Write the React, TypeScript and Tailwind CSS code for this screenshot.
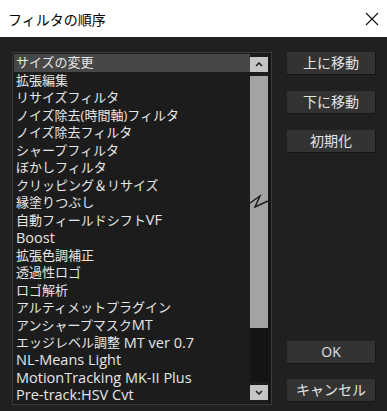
import React from "react";

const items = [
  "サイズの変更",
  "拡張編集",
  "リサイズフィルタ",
  "ノイズ除去(時間軸)フィルタ",
  "ノイズ除去フィルタ",
  "シャープフィルタ",
  "ぼかしフィルタ",
  "クリッピング＆リサイズ",
  "縁塗りつぶし",
  "自動フィールドシフトVF",
  "Boost",
  "拡張色調補正",
  "透過性ロゴ",
  "ロゴ解析",
  "アルティメットプラグイン",
  "アンシャープマスクMT",
  "エッジレベル調整 MT ver 0.7",
  "NL-Means Light",
  "MotionTracking MK-II Plus",
  "Pre-track:HSV Cvt",
];

const font = { fontFamily: '"Noto Sans CJK JP", "Noto Sans", sans-serif' };
const listFont = { fontFamily: '"Open Sans", "Noto Sans CJK JP", sans-serif' };

function Runs({ text }: { text: string }) {
  const parts = text.split(/([A-Za-z0-9 .:\-]+)/).filter((p) => p.length > 0);
  return (
    <>
      {parts.map((p, i) =>
        /^[A-Za-z0-9 .:\-]+$/.test(p) ? (
          <span key={i} className="text-[14.5px] whitespace-pre">
            {p}
          </span>
        ) : (
          <span key={i}>{p}</span>
        )
      )}
    </>
  );
}

function Btn({ children }: { children: React.ReactNode }) {
  return (
    <div
      className="w-[89px] h-[23px] bg-[#333333] border-b border-r border-[#161616] flex items-center justify-center text-[14px] text-[#e4e4e4] leading-none"
      style={listFont}
    >
      {children}
    </div>
  );
}

export default function App() {
  return (
    <div className="w-[387px] h-[411px] flex flex-col overflow-hidden" style={font}>
      <div className="h-[37px] bg-white flex items-center justify-between pl-[8px] pr-[6px] shrink-0">
        <span className="text-[14px] text-black leading-none">フィルタの順序</span>
        <svg width="14" height="14" viewBox="0 0 14 14" className="mr-[2px]">
          <path d="M1 1 L13 13 M13 1 L1 13" stroke="#111" strokeWidth="1.1" fill="none" />
        </svg>
      </div>
      <div className="flex-1 bg-[#202020] flex pt-[15px] pl-[12px]">
        <div className="w-[260px] h-[353px] border border-[#3a3a3a] bg-[#1c1c1c] flex">
          <div className="flex-1 flex flex-col pt-[1px] pl-[1px]" style={listFont}>
            {items.map((t, i) => (
              <div
                key={t}
                className={
                  "h-[17.5px] shrink-0 flex items-center pl-[2px] text-[13px] leading-none whitespace-nowrap text-[#e6e6e6] " +
                  (i === 0 ? "bg-[#474747]" : "")
                }
              >
                <Runs text={t} />
              </div>
            ))}
          </div>
          <div className="w-[18px] flex flex-col pt-[4px] pb-[4px] shrink-0">
            <div className="h-[15px] bg-[#c6c6c6] flex items-center justify-center shrink-0">
              <svg width="8" height="5" viewBox="0 0 8 5">
                <path d="M1 4 L4 1 L7 4" stroke="#222" strokeWidth="1.6" fill="none" />
              </svg>
            </div>
            <div className="h-[4px] shrink-0" />
            <div className="h-[252px] bg-[#a3a3a3] shrink-0 relative">
              <svg width="20" height="14" viewBox="0 0 20 14" className="absolute left-[-1px] top-[118px]">
                <path d="M1 9 L11 2 L6 13 L19 7" stroke="#1a1a1a" strokeWidth="1.4" fill="none" strokeLinejoin="miter" />
              </svg>
            </div>
            <div className="flex-1 bg-[#141414]" />
            <div className="h-[3px] shrink-0" />
            <div className="h-[15px] bg-[#c6c6c6] flex items-center justify-center shrink-0">
              <svg width="8" height="5" viewBox="0 0 8 5">
                <path d="M1 1 L4 4 L7 1" stroke="#222" strokeWidth="1.6" fill="none" />
              </svg>
            </div>
          </div>
          <div className="w-[3px] bg-[#161616] shrink-0" />
        </div>
        <div className="ml-[15px] flex flex-col">
          <Btn>上に移動</Btn>
          <div className="h-[16px]" />
          <Btn>下に移動</Btn>
          <div className="h-[16px]" />
          <Btn>初期化</Btn>
          <div className="h-[188px]" />
          <Btn>OK</Btn>
          <div className="h-[15px]" />
          <Btn>キャンセル</Btn>
        </div>
      </div>
    </div>
  );
}
